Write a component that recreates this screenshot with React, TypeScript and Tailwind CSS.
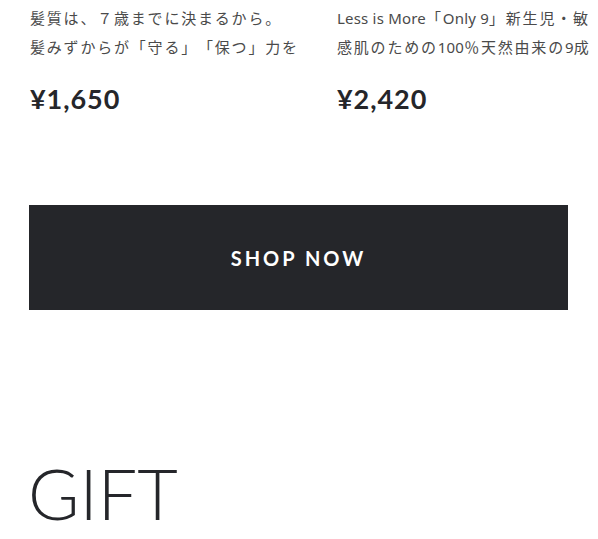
import type { ReactNode } from 'react'

const Latin = ({ children }: { children: ReactNode }) => (
  <span className="tracking-[0.2px]">{children}</span>
)

const products: { lines: ReactNode[]; price: string }[] = [
  {
    lines: ['髪質は、７歳までに決まるから。', '髪みずからが「守る」「保つ」力を'],
    price: '¥1,650',
  },
  {
    lines: [
      <>
        <Latin>Less is More</Latin>「<Latin>Only 9</Latin>」新生児・敏
      </>,
      <>
        感肌のための<Latin>100</Latin>％天然由来の<Latin>9</Latin>成
      </>,
    ],
    price: '¥2,420',
  },
]

export default function App() {
  return (
    <main
      className="w-[598px] h-[539px] overflow-hidden bg-white text-[#25262a]"
      style={{ fontFamily: '"Noto Sans", "Noto Sans CJK JP", sans-serif' }}
    >
      <section className="flex gap-[39px] pl-[30px] pt-[4px]" aria-label="products">
        {products.map((p) => (
          <article key={p.price} className="w-[268px] shrink-0">
            <p className="text-[15px] leading-[29px] tracking-[1.8px] text-[#4a4a4a] [text-spacing-trim:space-all]">
              {p.lines.map((l, i) => (
                <span key={i} className="block whitespace-nowrap">{l}</span>
              ))}
            </p>
            <p
              className="mt-[21px] text-[27px] font-bold leading-[32px] tracking-[0.035em]"
              style={{ fontFamily: 'Lato, sans-serif' }}
            >
              {p.price}
            </p>
          </article>
        ))}
      </section>

      <div className="px-[29px] pt-[90px]">
        <button className="flex h-[105px] w-[539px] items-center justify-center bg-[#25262a] text-white">
          <span
            className="text-[20px] font-bold tracking-[0.15em]"
            style={{ fontFamily: 'Lato, sans-serif' }}
          >
            SHOP NOW
          </span>
        </button>
      </div>

      <h2
        className="pl-[28px] pt-[148px] text-[70px] font-light leading-none"
        style={{ fontFamily: 'Lato, sans-serif' }}
      >
        GIFT
      </h2>
    </main>
  )
}
